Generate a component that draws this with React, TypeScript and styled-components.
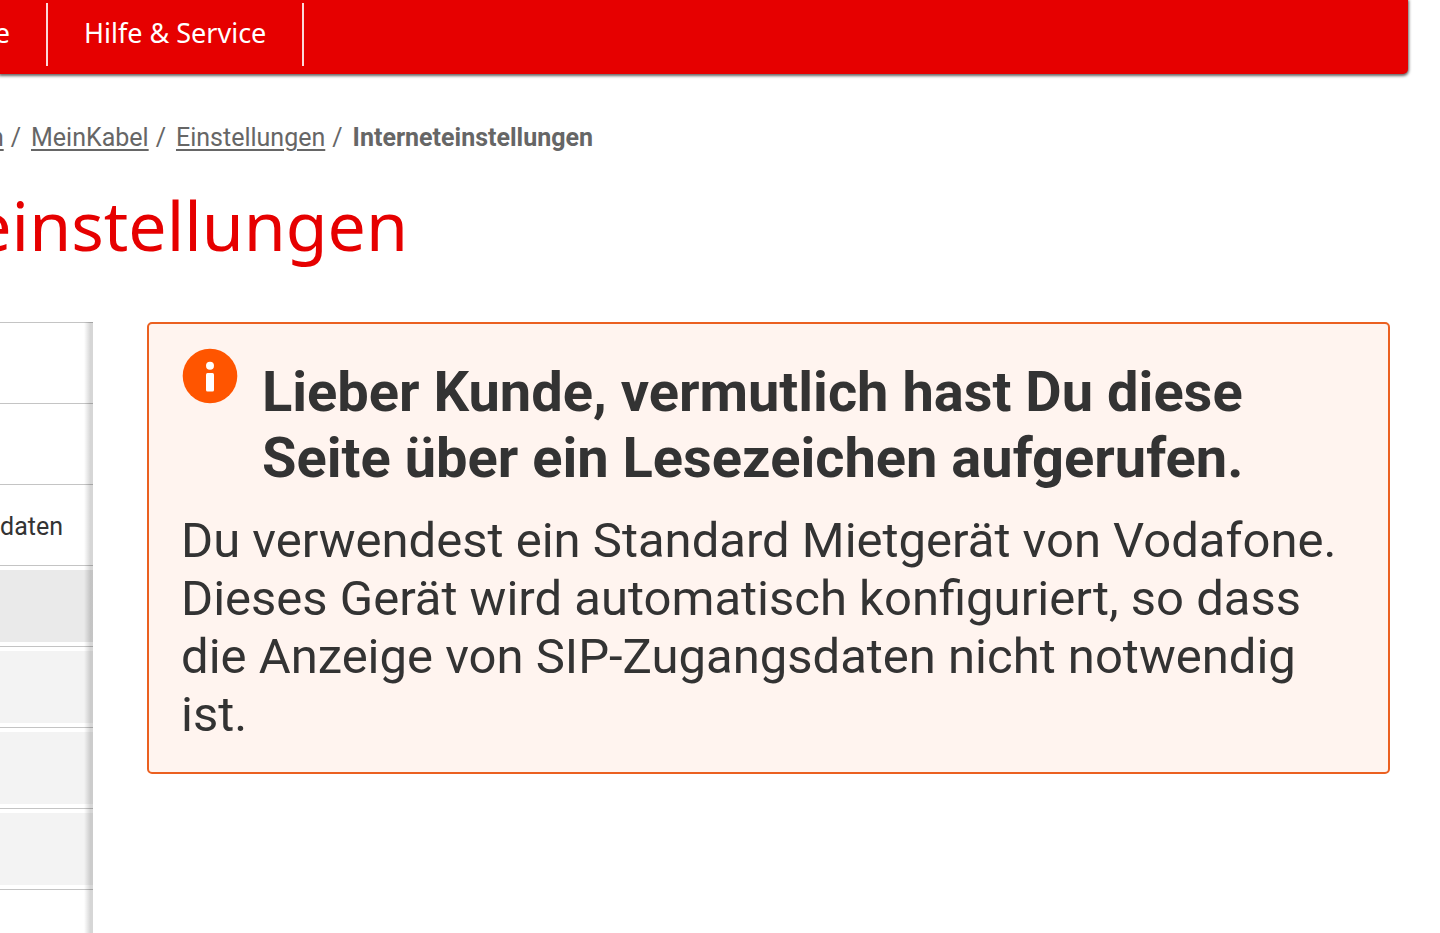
import React from "react";
import styled, { createGlobalStyle } from "styled-components";

const GlobalStyle = createGlobalStyle`
  *, *::before, *::after { box-sizing: border-box; }
  body {
    margin: 0;
    background: #fff;
    color: #333;
    font-family: Roboto, "Liberation Sans", sans-serif;
  }
`;

const Page = styled.div`
  display: flex;
  flex-direction: column;
  min-height: 100vh;
  overflow: hidden;
`;

const TopBar = styled.header`
  height: 74px;
  margin-right: 32px;
  padding-top: 3px;
  background: #e60000;
  border-radius: 0 0 5px 0;
  box-shadow: 0 1px 3px 1px rgba(0, 0, 0, 0.6);
`;

const MainNav = styled.nav`
  display: flex;
  height: 63px;
`;

const NavLink = styled.a<{ $cut?: boolean }>`
  display: flex;
  flex: none;
  justify-content: flex-end;
  width: ${(p) => (p.$cut ? "48px" : "auto")};
  padding: ${(p) => (p.$cut ? "0 36px 0 0" : "0 36px")};
  border-right: 2px solid #fbd9d9;
  color: #fff;
  font-family: "Noto Sans", sans-serif;
  font-size: 27px;
  line-height: 60px;
  text-decoration: none;
  white-space: nowrap;
`;

const Breadcrumbs = styled.nav`
  display: flex;
  justify-content: flex-end;
  width: 593px;
  margin-top: 49px;
  color: #666;
  font-size: 25px;
  line-height: 30px;
  white-space: nowrap;
`;

const Crumb = styled.a`
  color: inherit;
  text-decoration: underline;
  text-decoration-thickness: 2px;
  text-underline-offset: 3px;
`;

const Slash = styled.span`
  padding: 0 10px 0 7px;
`;

const PageTitle = styled.h1`
  display: flex;
  justify-content: flex-end;
  width: 408px;
  margin: 22px 0 0;
  color: #e60000;
  font-family: "Noto Sans", sans-serif;
  font-size: 68px;
  font-weight: 400;
  line-height: 100px;
`;

const Columns = styled.div`
  display: flex;
  flex: 1;
  gap: 54px;
  margin-top: 47px;
  padding-right: 50px;
`;

const SideMenu = styled.nav`
  position: relative;
  flex: none;
  width: 93px;

  &::after {
    content: "";
    position: absolute;
    inset: 0 0 0 auto;
    width: 9px;
    background: linear-gradient(to right, rgba(0, 0, 0, 0), rgba(0, 0, 0, 0.16) 70%);
  }
`;

const MenuRow = styled.div`
  display: flex;
  align-items: center;
  justify-content: flex-end;
  height: 81px;
  padding: 8px 30px 4px 0;
  border-top: 1px solid #c4c4c4;
`;

const FilledRow = styled(MenuRow)<{ $fill: string }>`
  padding: 4px 0;
  background: ${(p) => p.$fill};
  background-clip: content-box;
`;

const MenuLink = styled.a`
  color: #333;
  font-size: 25px;
  line-height: 30px;
  text-decoration: none;
`;

const Notice = styled.section`
  flex: 1;
  align-self: flex-start;
  padding: 24px 32px 28px;
  border: 2px solid #eb6020;
  border-radius: 5px;
  background: #fff4ef;
`;

const NoticeHead = styled.div`
  display: flex;
  gap: 24px;
`;

const InfoIcon = styled.svg`
  flex: none;
  width: 57px;
  height: 56px;
`;

const NoticeTitle = styled.h2`
  margin: 11px 0 0;
  font-size: 56px;
  font-weight: 700;
  line-height: 66px;
`;

const NoticeText = styled.p`
  margin: 21px 0 0;
  font-size: 49px;
  line-height: 58px;
`;

const fills = ["#eaeaea", "#f3f3f3", "#f3f3f3", "#f3f3f3"];

export default function App() {
  return (
    <Page>
      <GlobalStyle />
      <TopBar>
        <MainNav aria-label="Hauptnavigation">
          <NavLink href="#" $cut>e</NavLink>
          <NavLink href="#hilfe">Hilfe &amp; Service</NavLink>
        </MainNav>
      </TopBar>
      <Breadcrumbs aria-label="Brotkrumen">
        <Crumb href="#">n</Crumb>
        <Slash>/</Slash>
        <Crumb href="#meinkabel">MeinKabel</Crumb>
        <Slash>/</Slash>
        <Crumb href="#einstellungen">Einstellungen</Crumb>
        <Slash>/</Slash>
        <strong>Interneteinstellungen</strong>
      </Breadcrumbs>
      <PageTitle>einstellungen</PageTitle>
      <Columns>
        <SideMenu aria-label="Einstellungen">
          <MenuRow />
          <MenuRow />
          <MenuRow>
            <MenuLink href="#daten">daten</MenuLink>
          </MenuRow>
          {fills.map((fill, i) => (
            <FilledRow key={i} $fill={fill} />
          ))}
          <MenuRow />
        </SideMenu>
        <Notice>
          <NoticeHead>
            <InfoIcon viewBox="0 0 57 56" aria-hidden="true">
              <circle cx="29" cy="28" r="27.3" fill="#ff5500" />
              <circle cx="29" cy="17.8" r="4" fill="#fff" />
              <rect x="25" y="25" width="8" height="18.5" rx="1.5" fill="#fff" />
            </InfoIcon>
            <NoticeTitle>
              Lieber Kunde, vermutlich hast Du diese Seite über ein Lesezeichen aufgerufen.
            </NoticeTitle>
          </NoticeHead>
          <NoticeText>
            Du verwendest ein Standard Mietgerät von Vodafone. Dieses Gerät wird automatisch
            konfiguriert, so dass die Anzeige von SIP-Zugangsdaten nicht notwendig ist.
          </NoticeText>
        </Notice>
      </Columns>
    </Page>
  );
}
